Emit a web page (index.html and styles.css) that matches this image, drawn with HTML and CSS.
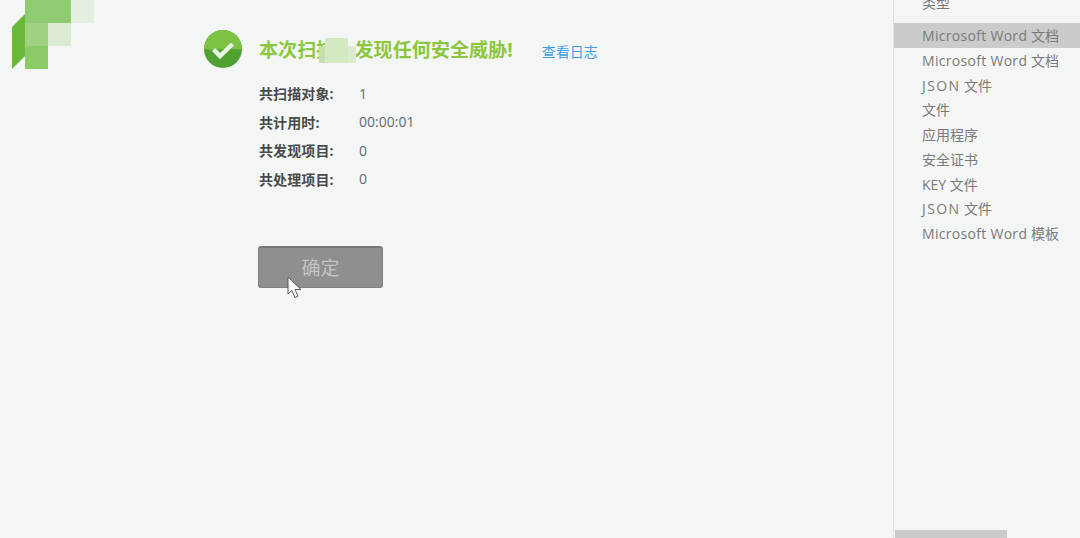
FILE: index.html
```html
<!DOCTYPE html>
<html lang="zh-CN">
<head>
<meta charset="utf-8">
<title>扫描结果</title>
<link rel="stylesheet" href="styles.css">
</head>
<body>
<div class="app">
  <main class="main">
    <svg class="logo" width="94" height="69" viewBox="0 0 94 69" aria-hidden="true">
      <polygon points="12,27 25,14 25,56 12,69" fill="#6ab93a"/>
      <rect x="25" y="0" width="46" height="23" fill="#8fcb70"/>
      <rect x="71" y="0" width="23" height="23" fill="#e5efe0"/>
      <rect x="25" y="23" width="23" height="23" fill="#a0d082"/>
      <rect x="48" y="23" width="23" height="23" fill="#dbebd2"/>
      <rect x="25" y="46" width="23" height="23" fill="#8bca66"/>
    </svg>
    <section class="result">
      <div class="headline">
        <svg class="check" width="38" height="38" viewBox="0 0 38 38" aria-hidden="true">
          <circle cx="19" cy="19" r="19" fill="#4fa232"/>
          <path d="M0 19a19 19 0 0 1 38 0c-6 1-12-1-19 0s-13 1-19 0z" fill="#7cc243"/>
          <path d="M9.500 19.500l6.500 6.500 12.500-12" fill="none" stroke="#e9f3e2" stroke-width="4.500"/>
        </svg>
        <h1 class="title">本次扫描未发现任何安全威胁!</h1>
        <a class="log-link">查看日志</a>
        <div class="mask" aria-hidden="true">
          <span class="mask-a"></span><span class="mask-b"></span><span class="mask-c"></span>
        </div>
      </div>
      <dl class="stats">
        <div class="stat"><dt>共扫描对象:</dt><dd>1</dd></div>
        <div class="stat"><dt>共计用时:</dt><dd>00:00:01</dd></div>
        <div class="stat"><dt>共发现项目:</dt><dd>0</dd></div>
        <div class="stat"><dt>共处理项目:</dt><dd>0</dd></div>
      </dl>
      <div class="confirm-wrap">
        <button class="confirm" type="button">确定</button>
        <svg class="cursor" width="17" height="24" viewBox="0 0 17 24" aria-hidden="true">
          <path d="M1 1v17l4-3.500 3 7 3-1.300-3-6.700h6z" fill="#fff" stroke="#555" stroke-width="1"/>
        </svg>
      </div>
    </section>
  </main>
  <aside class="side">
    <div class="side-head">类型</div>
    <ul class="types">
      <li class="type selected"><span class="word">Microsoft Word</span> 文档</li>
      <li class="type"><span class="word">Microsoft Word</span> 文档</li>
      <li class="type"><span class="json">JSON</span> 文件</li>
      <li class="type">文件</li>
      <li class="type">应用程序</li>
      <li class="type">安全证书</li>
      <li class="type">KEY 文件</li>
      <li class="type"><span class="json">JSON</span> 文件</li>
      <li class="type"><span class="word">Microsoft Word</span> 模板</li>
    </ul>
    <div class="scroll"><div class="thumb"></div></div>
  </aside>
</div>
</body>
</html>
```
FILE: styles.css
```css
* { box-sizing: border-box; }
html, body { margin: 0; height: 538px; overflow: hidden; }
body {
  background: #f4f6f5;
  font-family: "Open Sans", "Noto Sans CJK SC", sans-serif;
}
.app { display: flex; height: 538px; }
.main { position: relative; width: 893px; flex: none; padding: 30px 0 0 204px; }
.logo { position: absolute; left: 0; top: 0; }
.result { display: flex; flex-direction: column; }
.headline { position: relative; display: flex; align-items: center; height: 38px; }
.check { flex: none; }
.title {
  margin: 2px 0 0 17px;
  font-size: 19px;
  line-height: 38px;
  font-weight: 700;
  letter-spacing: 0.1px;
  color: #8cc63f;
  white-space: nowrap;
}
.log-link { margin: 4px 0 0 29px; font-size: 14px; color: #3f9ce8; white-space: nowrap; }
.mask { position: absolute; left: 115px; top: 8px; width: 37px; height: 25px; display: grid; grid-template-columns: 6px 23px 8px; }
.mask span { display: block; }
.mask-a { background: #c5e0b0; margin-top: 8px; }
.mask-b { background: #d4e8c2; }
.mask-c { background: #dcebcf; border-top: 8px solid #f4f6f5; }
.stats { margin: 11px 0 0 55px; }
.stat { display: flex; align-items: center; height: 28.500px; }
.stat dt { width: 100px; font-size: 14px; font-weight: 700; letter-spacing: 0.1px; color: #4a4a4a; white-space: nowrap; }
.stat dd { margin: 0; font-size: 14px; color: #5f6b73; }
.confirm-wrap { position: relative; margin: 53px 0 0 54px; width: 125px; }
.confirm {
  display: block;
  width: 125px;
  height: 42px;
  padding: 0 0 2px;
  background: #8f8f8f;
  border: 1px solid #808080;
  border-top: 2px solid #777;
  border-radius: 3px;
  font-family: "Noto Sans CJK SC", sans-serif;
  font-size: 19px;
  color: #c4c4c4;
}
.cursor { position: absolute; left: 29px; top: 30px; }
.side { width: 187px; flex: none; display: flex; flex-direction: column; border-left: 1px solid #dcdfe0; overflow: hidden; }
.side-head { margin-top: -7px; padding-left: 28px; flex: none; height: 30px; line-height: 20px; font-size: 14px; color: #777; }
.types { margin: 0; padding: 0; list-style: none; flex: 1; }
.type { height: 24.750px; line-height: 25px; padding-left: 28px; font-size: 14px; color: #7a7a7a; white-space: nowrap; }
.word { letter-spacing: 0.3px; }
.json { letter-spacing: 1.400px; }
.selected { background: #cbcbcb; }
.scroll { height: 8px; flex: none; }
.thumb { width: 112px; height: 8px; margin-left: 1px; background: #cbcbcb; }
```
